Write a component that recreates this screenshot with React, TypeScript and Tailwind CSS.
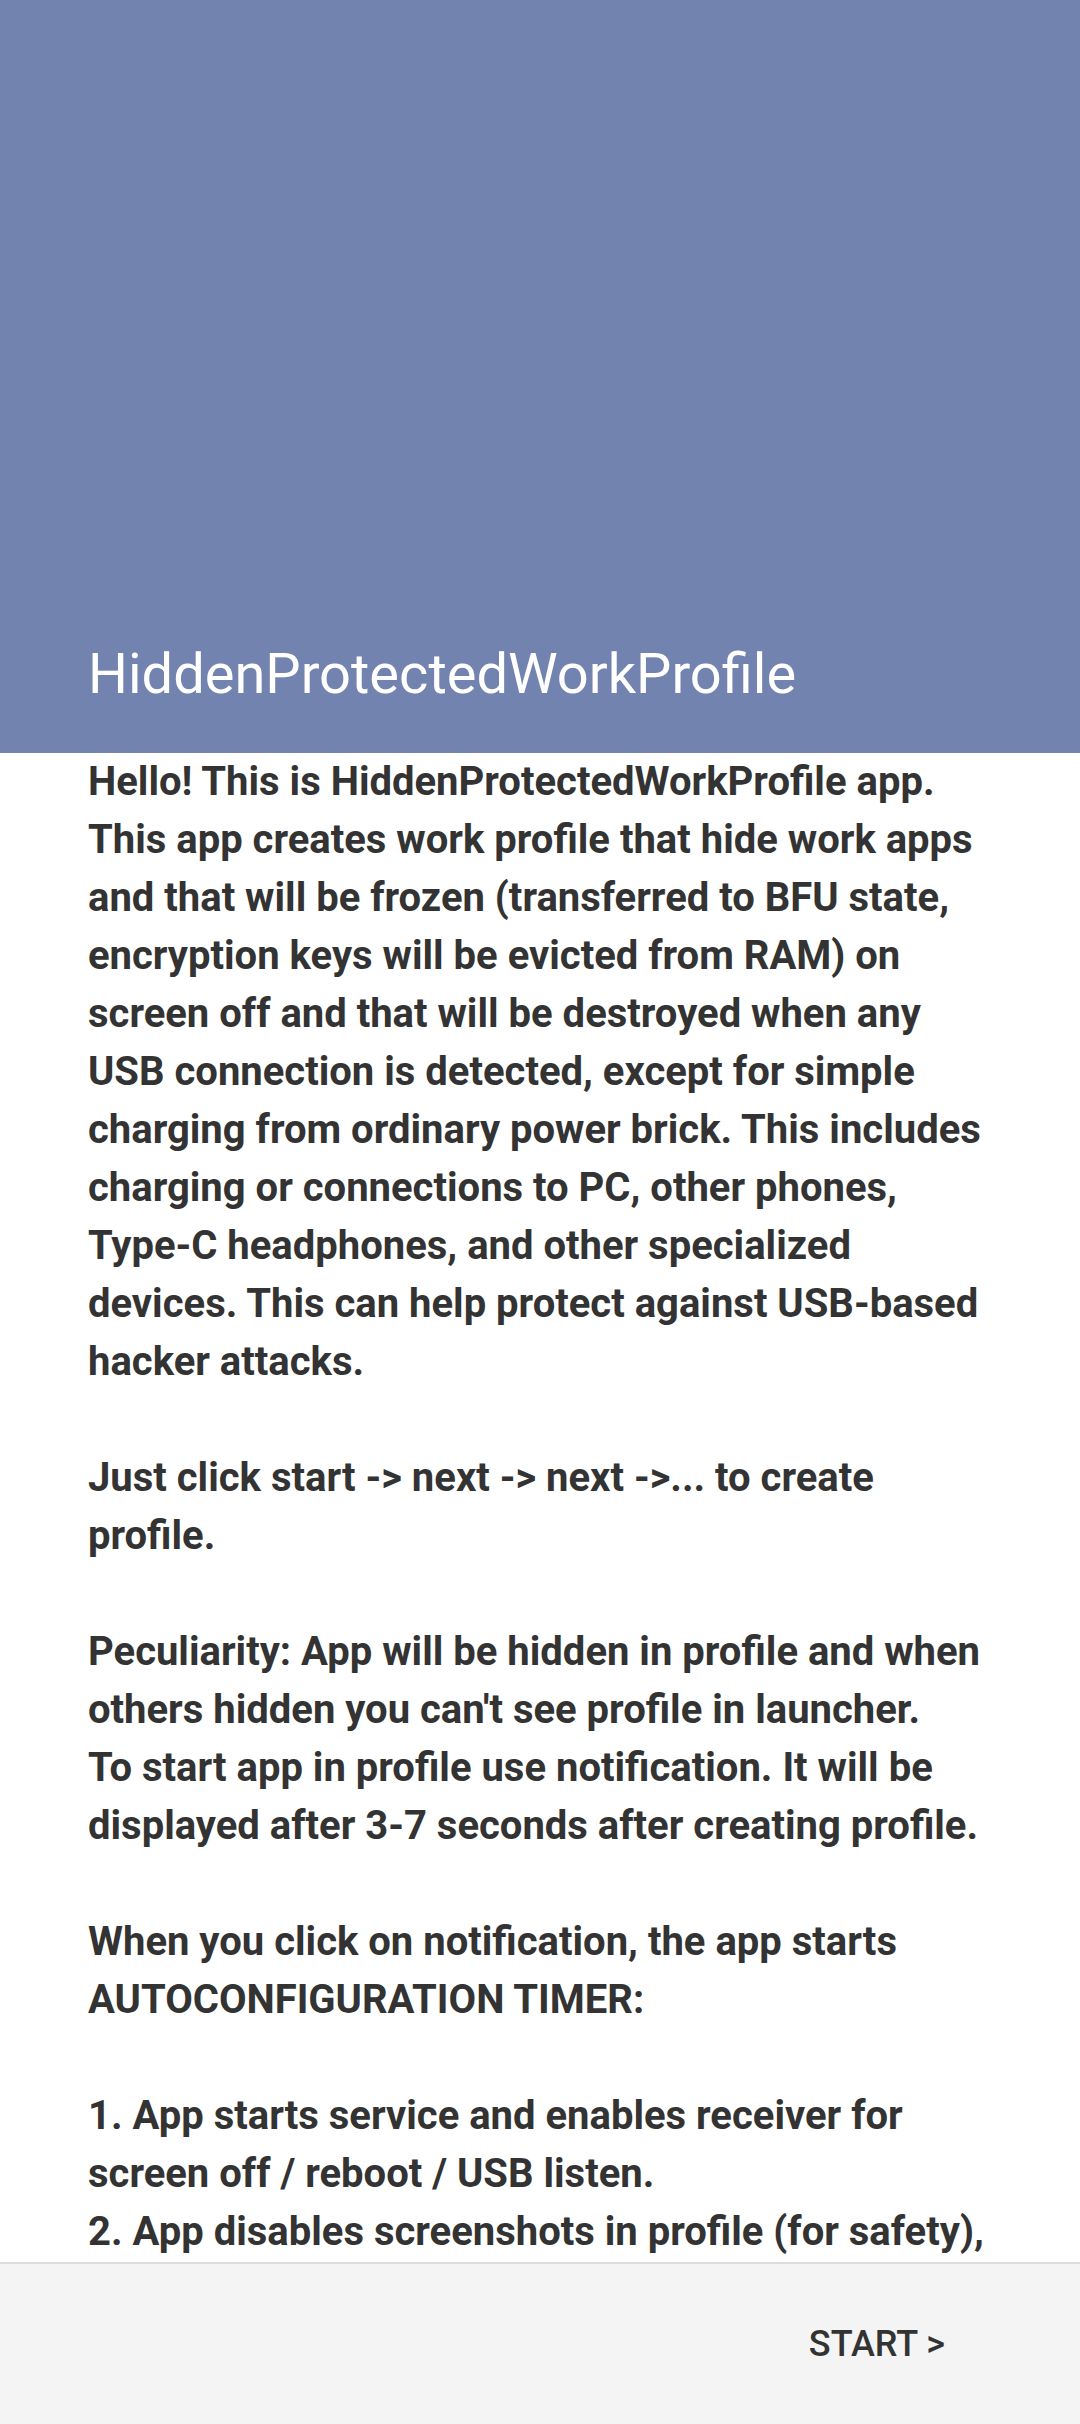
import React from "react";

const lines: string[] = [
  "Hello! This is HiddenProtectedWorkProfile app.",
  "This app creates work profile that hide work apps",
  "and that will be frozen (transferred to BFU state,",
  "encryption keys will be evicted from RAM) on",
  "screen off and that will be destroyed when any",
  "USB connection is detected, except for simple",
  "charging from ordinary power brick. This includes",
  "charging or connections to PC, other phones,",
  "Type-C headphones, and other specialized",
  "devices. This can help protect against USB-based",
  "hacker attacks.",
  "",
  "Just click start -> next -> next ->... to create",
  "profile.",
  "",
  "Peculiarity: App will be hidden in profile and when",
  "others hidden you can't see profile in launcher.",
  "To start app in profile use notification. It will be",
  "displayed after 3-7 seconds after creating profile.",
  "",
  "When you click on notification, the app starts",
  "AUTOCONFIGURATION TIMER:",
  "",
  "1. App starts service and enables receiver for",
  "screen off / reboot / USB listen.",
  "2. App disables screenshots in profile (for safety),",
];

export default function App() {
  return (
    <div
      className="w-[1080px] h-[2424px] flex flex-col overflow-hidden bg-white"
      style={{ fontFamily: "Roboto, 'Noto Sans', sans-serif" }}
    >
      <div className="h-[753px] shrink-0 bg-[#7383b0] flex items-end px-[88px] pb-[46px]">
        <h1 className="text-[56px] leading-[66px] text-white font-normal whitespace-nowrap">
          HiddenProtectedWorkProfile
        </h1>
      </div>
      <div className="flex-1 overflow-hidden pl-[88px] text-[#333333]">
        {lines.map((l, i) => (
          <div
            key={i}
            className="h-[58px] leading-[58px] text-[40px] font-bold whitespace-nowrap"
          >
            {l || "\u00a0"}
          </div>
        ))}
      </div>
      <div className="h-[162px] shrink-0 border-t-2 border-[#dcdcdc] bg-[#f4f4f4] flex items-center justify-end pr-[135px]">
        <span className="text-[36px] font-medium text-[#333333]">START &gt;</span>
      </div>
    </div>
  );
}
